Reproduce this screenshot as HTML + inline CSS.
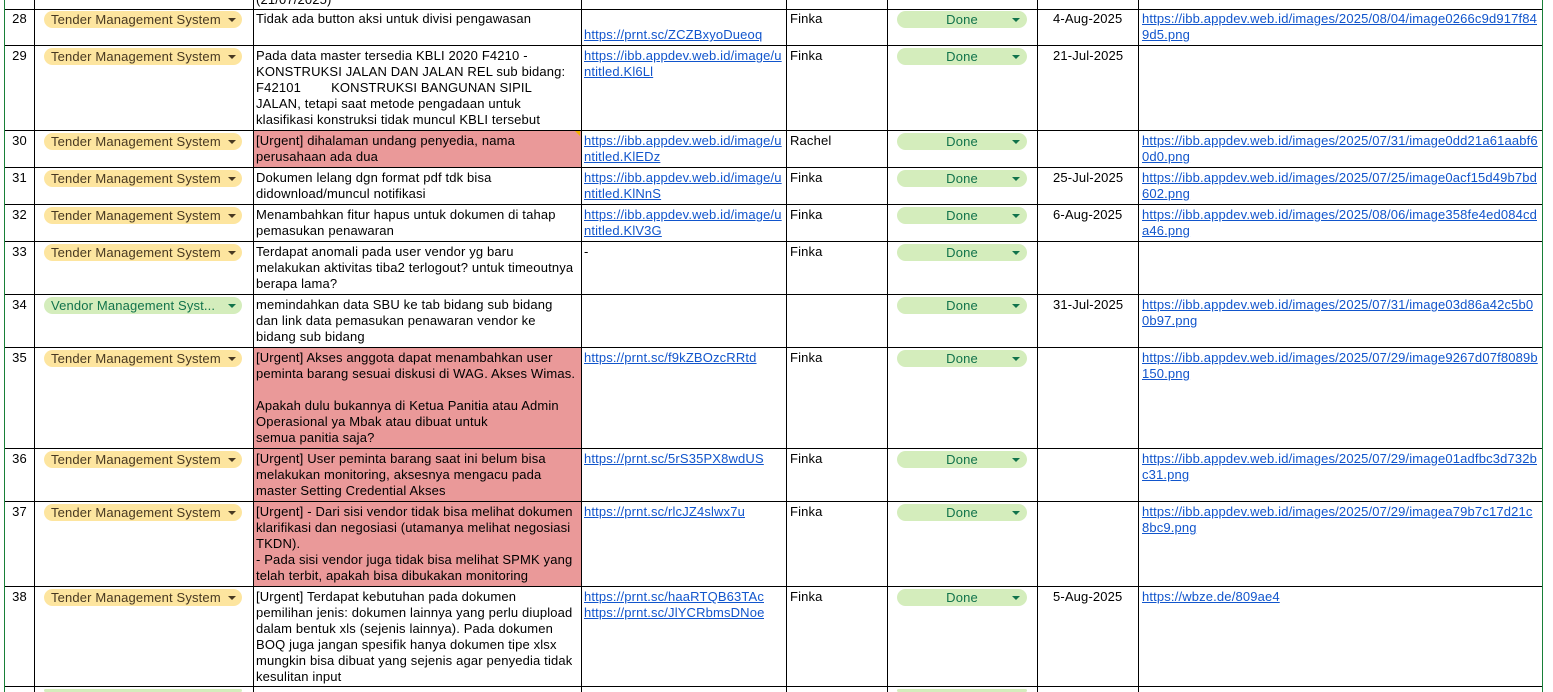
<!DOCTYPE html>
<html style="overflow:hidden;width:1553px;height:692px"><head><meta charset="utf-8"><style>
body{margin:0;width:1553px;height:692px;overflow:hidden;background:#fff;font-family:"Liberation Sans",Arial,sans-serif;font-size:13px;letter-spacing:0.15px;color:#000;position:relative}
.h{position:absolute;left:5px;width:1537px;height:1px;background:#000}
.v{position:absolute;top:0;height:692px;width:1px;background:#000}
.c{position:absolute;line-height:16px;white-space:nowrap;overflow:hidden}
.n{width:29px;text-align:center;left:5px}
.red{position:absolute;background:#ea9999}
a{color:#1155cc;text-decoration:underline}
.p{position:absolute;height:17px;border-radius:9px;line-height:17px;font-size:13px;overflow:hidden}
.t{background:#fde59f;color:#473821;left:44px;width:198px}
.g{background:#d4edbc;color:#11734b;left:44px;width:198px}
.d{background:#d4edbc;color:#11734b;left:897px;width:130px;text-align:center}
.p span{padding-left:7px}
.ar{position:absolute;right:6px;top:7px;width:0;height:0;border-left:4px solid transparent;border-right:4px solid transparent;border-top:4px solid currentColor}
.d .ar{right:7px}
</style></head><body>
<div class="red" style="left:253px;top:130px;width:328px;height:37px"></div>
<div class="red" style="left:253px;top:347px;width:328px;height:239px"></div>
<div style="position:absolute;left:575px;top:131px;border-left:5px solid transparent;border-top:5px solid #f4b400"></div>

<div class="h" style="top:9px"></div><div class="h" style="top:45px"></div><div class="h" style="top:130px"></div><div class="h" style="top:167px"></div><div class="h" style="top:204px"></div><div class="h" style="top:241px"></div><div class="h" style="top:294px"></div><div class="h" style="top:347px"></div><div class="h" style="top:448px"></div><div class="h" style="top:501px"></div><div class="h" style="top:586px"></div><div class="h" style="top:686px"></div>
<div class="v" style="left:4px;background:#188038"></div><div class="v" style="left:34px"></div><div class="v" style="left:253px"></div><div class="v" style="left:581px"></div><div class="v" style="left:786px"></div><div class="v" style="left:887px"></div><div class="v" style="left:1037px"></div><div class="v" style="left:1138px"></div><div class="v" style="left:1542px;background:#188038"></div>

<div class="c" style="left:256px;top:-8px">(21/07/2025)</div>

<!-- 28 -->
<div class="c n" style="top:11px">28</div>
<div class="p t" style="top:11px"><span>Tender Management System</span><i class="ar"></i></div>
<div class="c" style="left:256px;top:11px">Tidak ada button aksi untuk divisi pengawasan</div>
<div class="c" style="left:584px;top:27px"><a>https://prnt.sc/ZCZBxyoDueoq</a></div>
<div class="c" style="left:790px;top:11px">Finka</div>
<div class="p d" style="top:11px">Done<i class="ar"></i></div>
<div class="c" style="left:1053px;top:11px">4-Aug-2025</div>
<div class="c" style="left:1142px;top:11px"><a>https://ibb.appdev.web.id/images/2025/08/04/image0266c9d917f84</a><br><a>9d5.png</a></div>
<!-- 29 -->
<div class="c n" style="top:48px">29</div>
<div class="p t" style="top:48px"><span>Tender Management System</span><i class="ar"></i></div>
<div class="c" style="left:256px;top:48px">Pada data master tersedia KBLI 2020 F4210 -<br>KONSTRUKSI JALAN DAN JALAN REL sub bidang:<br>F42101&nbsp;&nbsp;&nbsp;&nbsp;&nbsp;&nbsp;&nbsp;&nbsp;KONSTRUKSI BANGUNAN SIPIL<br>JALAN, tetapi saat metode pengadaan untuk<br>klasifikasi konstruksi tidak muncul KBLI tersebut</div>
<div class="c" style="left:584px;top:48px"><a>https://ibb.appdev.web.id/image/u</a><br><a>ntitled.Kl6Ll</a></div>
<div class="c" style="left:790px;top:48px">Finka</div>
<div class="p d" style="top:48px">Done<i class="ar"></i></div>
<div class="c" style="left:1053px;top:48px">21-Jul-2025</div>
<!-- 30 -->
<div class="c n" style="top:133px">30</div>
<div class="p t" style="top:133px"><span>Tender Management System</span><i class="ar"></i></div>
<div class="c" style="left:256px;top:133px">[Urgent] dihalaman undang penyedia, nama<br>perusahaan ada dua</div>
<div class="c" style="left:584px;top:133px"><a>https://ibb.appdev.web.id/image/u</a><br><a>ntitled.KlEDz</a></div>
<div class="c" style="left:790px;top:133px">Rachel</div>
<div class="p d" style="top:133px">Done<i class="ar"></i></div>
<div class="c" style="left:1142px;top:133px"><a>https://ibb.appdev.web.id/images/2025/07/31/image0dd21a61aabf6</a><br><a>0d0.png</a></div>
<!-- 31 -->
<div class="c n" style="top:170px">31</div>
<div class="p t" style="top:170px"><span>Tender Management System</span><i class="ar"></i></div>
<div class="c" style="left:256px;top:170px">Dokumen lelang dgn format pdf tdk bisa<br>didownload/muncul notifikasi</div>
<div class="c" style="left:584px;top:170px"><a>https://ibb.appdev.web.id/image/u</a><br><a>ntitled.KlNnS</a></div>
<div class="c" style="left:790px;top:170px">Finka</div>
<div class="p d" style="top:170px">Done<i class="ar"></i></div>
<div class="c" style="left:1053px;top:170px">25-Jul-2025</div>
<div class="c" style="left:1142px;top:170px"><a>https://ibb.appdev.web.id/images/2025/07/25/image0acf15d49b7bd</a><br><a>602.png</a></div>
<!-- 32 -->
<div class="c n" style="top:207px">32</div>
<div class="p t" style="top:207px"><span>Tender Management System</span><i class="ar"></i></div>
<div class="c" style="left:256px;top:207px">Menambahkan fitur hapus untuk dokumen di tahap<br>pemasukan penawaran</div>
<div class="c" style="left:584px;top:207px"><a>https://ibb.appdev.web.id/image/u</a><br><a>ntitled.KlV3G</a></div>
<div class="c" style="left:790px;top:207px">Finka</div>
<div class="p d" style="top:207px">Done<i class="ar"></i></div>
<div class="c" style="left:1053px;top:207px">6-Aug-2025</div>
<div class="c" style="left:1142px;top:207px"><a>https://ibb.appdev.web.id/images/2025/08/06/image358fe4ed084cd</a><br><a>a46.png</a></div>
<!-- 33 -->
<div class="c n" style="top:244px">33</div>
<div class="p t" style="top:244px"><span>Tender Management System</span><i class="ar"></i></div>
<div class="c" style="left:256px;top:244px">Terdapat anomali pada user vendor yg baru<br>melakukan aktivitas tiba2 terlogout? untuk timeoutnya<br>berapa lama?</div>
<div class="c" style="left:584px;top:244px">-</div>
<div class="c" style="left:790px;top:244px">Finka</div>
<div class="p d" style="top:244px">Done<i class="ar"></i></div>
<!-- 34 -->
<div class="c n" style="top:297px">34</div>
<div class="p g" style="top:297px"><span>Vendor Management Syst...</span><i class="ar"></i></div>
<div class="c" style="left:256px;top:297px">memindahkan data SBU ke tab bidang sub bidang<br>dan link data pemasukan penawaran vendor ke<br>bidang sub bidang</div>
<div class="p d" style="top:297px">Done<i class="ar"></i></div>
<div class="c" style="left:1053px;top:297px">31-Jul-2025</div>
<div class="c" style="left:1142px;top:297px"><a>https://ibb.appdev.web.id/images/2025/07/31/image03d86a42c5b0</a><br><a>0b97.png</a></div>
<!-- 35 -->
<div class="c n" style="top:350px">35</div>
<div class="p t" style="top:350px"><span>Tender Management System</span><i class="ar"></i></div>
<div class="c" style="left:256px;top:350px">[Urgent] Akses anggota dapat menambahkan user<br>peminta barang sesuai diskusi di WAG. Akses Wimas.<br><br>Apakah dulu bukannya di Ketua Panitia atau Admin<br>Operasional ya Mbak atau dibuat untuk<br>semua panitia saja?</div>
<div class="c" style="left:584px;top:350px"><a>https://prnt.sc/f9kZBOzcRRtd</a></div>
<div class="c" style="left:790px;top:350px">Finka</div>
<div class="p d" style="top:350px">Done<i class="ar"></i></div>
<div class="c" style="left:1142px;top:350px"><a>https://ibb.appdev.web.id/images/2025/07/29/image9267d07f8089b</a><br><a>150.png</a></div>
<!-- 36 -->
<div class="c n" style="top:451px">36</div>
<div class="p t" style="top:451px"><span>Tender Management System</span><i class="ar"></i></div>
<div class="c" style="left:256px;top:451px">[Urgent] User peminta barang saat ini belum bisa<br>melakukan monitoring, aksesnya mengacu pada<br>master Setting Credential Akses</div>
<div class="c" style="left:584px;top:451px"><a>https://prnt.sc/5rS35PX8wdUS</a></div>
<div class="c" style="left:790px;top:451px">Finka</div>
<div class="p d" style="top:451px">Done<i class="ar"></i></div>
<div class="c" style="left:1142px;top:451px"><a>https://ibb.appdev.web.id/images/2025/07/29/image01adfbc3d732b</a><br><a>c31.png</a></div>
<!-- 37 -->
<div class="c n" style="top:504px">37</div>
<div class="p t" style="top:504px"><span>Tender Management System</span><i class="ar"></i></div>
<div class="c" style="left:256px;top:504px">[Urgent] - Dari sisi vendor tidak bisa melihat dokumen<br>klarifikasi dan negosiasi (utamanya melihat negosiasi<br>TKDN).<br>- Pada sisi vendor juga tidak bisa melihat SPMK yang<br>telah terbit, apakah bisa dibukakan monitoring</div>
<div class="c" style="left:584px;top:504px"><a>https://prnt.sc/rlcJZ4slwx7u</a></div>
<div class="c" style="left:790px;top:504px">Finka</div>
<div class="p d" style="top:504px">Done<i class="ar"></i></div>
<div class="c" style="left:1142px;top:504px"><a>https://ibb.appdev.web.id/images/2025/07/29/imagea79b7c17d21c</a><br><a>8bc9.png</a></div>
<!-- 38 -->
<div class="c n" style="top:589px">38</div>
<div class="p t" style="top:589px"><span>Tender Management System</span><i class="ar"></i></div>
<div class="c" style="left:256px;top:589px">[Urgent] Terdapat kebutuhan pada dokumen<br>pemilihan jenis: dokumen lainnya yang perlu diupload<br>dalam bentuk xls (sejenis lainnya). Pada dokumen<br>BOQ juga jangan spesifik hanya dokumen tipe xlsx<br>mungkin bisa dibuat yang sejenis agar penyedia tidak<br>kesulitan input</div>
<div class="c" style="left:584px;top:589px"><a>https://prnt.sc/haaRTQB63TAc</a><br><a>https://prnt.sc/JlYCRbmsDNoe</a></div>
<div class="c" style="left:790px;top:589px">Finka</div>
<div class="p d" style="top:589px">Done<i class="ar"></i></div>
<div class="c" style="left:1053px;top:589px">5-Aug-2025</div>
<div class="c" style="left:1142px;top:589px"><a>https://wbze.de/809ae4</a></div>
<!-- 39 partial -->
<div class="p g" style="top:689px;height:3px"></div>
<div class="p d" style="top:689px;height:3px"></div>
</body></html>
